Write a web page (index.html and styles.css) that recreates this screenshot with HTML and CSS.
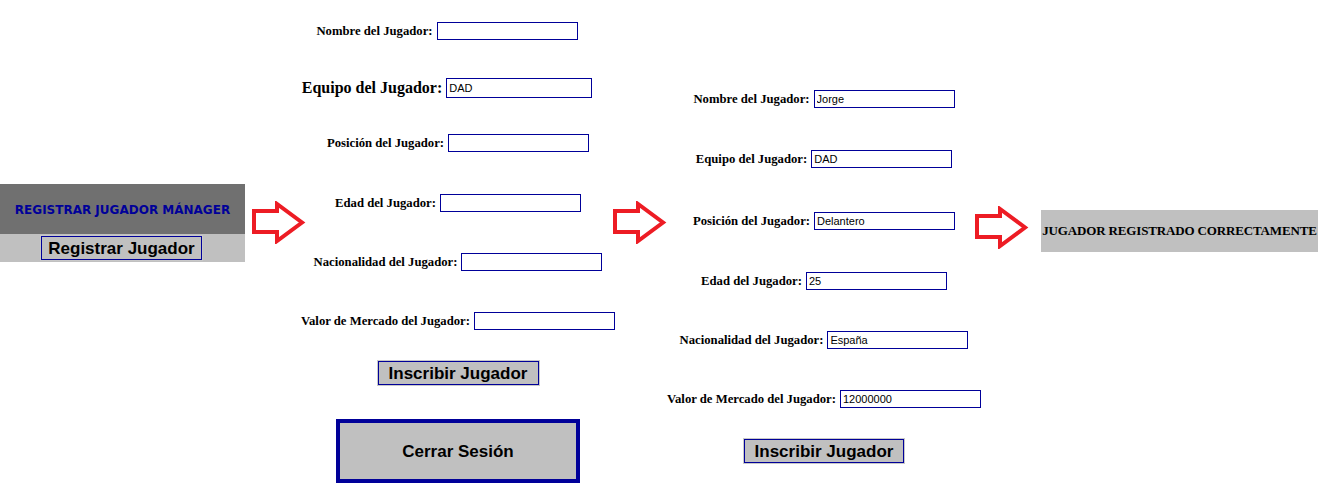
FILE: index.html
```html
<!DOCTYPE html>
<html lang="es">
<head>
<meta charset="utf-8">
<title>Registrar Jugador</title>
<link rel="stylesheet" href="styles.css">
</head>
<body>
<div class="canvas">
  <section class="menu">
    <div class="menu-title">REGISTRAR JUGADOR MÁNAGER</div>
    <div class="menu-bar"><button class="btn">Registrar Jugador</button></div>
  </section>

  <svg class="arrow arrow-1" width="55" height="43" viewBox="0 0 55 43"><path d="M3 10 H26 V3 L51 21.5 L26 40 V31 H3 Z" fill="#fff" stroke="#ed1c24" stroke-width="4" stroke-linejoin="miter"/></svg>

  <form class="form form-empty">
    <div class="row row-shift"><label class="lbl">Nombre del Jugador:</label><input class="field" type="text" value=""></div>
    <div class="row row-shift"><label class="lbl lbl-big">Equipo del Jugador:</label><input class="field field-tall" type="text" value="DAD"></div>
    <div class="row"><label class="lbl">Posición del Jugador:</label><input class="field" type="text" value=""></div>
    <div class="row"><label class="lbl">Edad del Jugador:</label><input class="field" type="text" value=""></div>
    <div class="row"><label class="lbl">Nacionalidad del Jugador:</label><input class="field" type="text" value=""></div>
    <div class="row"><label class="lbl">Valor de Mercado del Jugador:</label><input class="field" type="text" value=""></div>
    <div class="row"><button class="btn" type="button">Inscribir Jugador</button></div>
    <div class="row"><button class="btn btn-logout" type="button">Cerrar Sesión</button></div>
  </form>

  <svg class="arrow arrow-2" width="55" height="43" viewBox="0 0 55 43"><path d="M3 10 H26 V3 L51 21.5 L26 40 V31 H3 Z" fill="#fff" stroke="#ed1c24" stroke-width="4" stroke-linejoin="miter"/></svg>

  <form class="form form-filled">
    <div class="row"><label class="lbl">Nombre del Jugador:</label><input class="field" type="text" value="Jorge"></div>
    <div class="row"><label class="lbl">Equipo del Jugador:</label><input class="field" type="text" value="DAD"></div>
    <div class="row"><label class="lbl">Posición del Jugador:</label><input class="field" type="text" value="Delantero"></div>
    <div class="row"><label class="lbl">Edad del Jugador:</label><input class="field" type="text" value="25"></div>
    <div class="row"><label class="lbl">Nacionalidad del Jugador:</label><input class="field" type="text" value="España"></div>
    <div class="row"><label class="lbl">Valor de Mercado del Jugador:</label><input class="field" type="text" value="12000000"></div>
    <div class="row"><button class="btn btn-narrow" type="button">Inscribir Jugador</button></div>
  </form>

  <svg class="arrow arrow-3" width="55" height="43" viewBox="0 0 55 43"><path d="M3 10 H26 V3 L51 21.5 L26 40 V31 H3 Z" fill="#fff" stroke="#ed1c24" stroke-width="4" stroke-linejoin="miter"/></svg>

  <div class="result">JUGADOR REGISTRADO CORRECTAMENTE</div>
</div>
</body>
</html>
```
FILE: styles.css
```css
html, body {
  margin: 0;
  padding: 0;
  background: #fff;
}
body {
  font-family: "Liberation Serif", "Times New Roman", serif;
  color: #000;
  width: 1333px;
  height: 496px;
  overflow: hidden;
}
.canvas {
  display: flex;
  align-items: flex-start;
}

/* left menu */
.menu {
  width: 245px;
  margin-top: 184px;
  flex: none;
}
.menu-title {
  height: 50px;
  background: #707070;
  display: flex;
  align-items: center;
  justify-content: center;
  padding-top: 2px;
  box-sizing: border-box;
  font-family: "DejaVu Sans", Verdana, sans-serif;
  font-weight: 800;
  font-size: 12px;
  color: #000099;
}
.menu-bar {
  height: 28px;
  background: #c0c0c0;
  display: flex;
  align-items: center;
  justify-content: center;
  padding-right: 2px;
  box-sizing: border-box;
}

/* buttons */
.btn {
  width: 161px;
  height: 24px;
  margin: 0;
  padding: 2px 0 0;
  background: #c0c0c0;
  border: 1px solid #000099;
  box-shadow: 0 0 0 1px #c8c8c8;
  font-family: "Liberation Sans", Arial, sans-serif;
  font-weight: bold;
  font-size: 17px;
  color: #000;
  line-height: 20px;
}
.btn-narrow {
  width: 160px;
}
.btn-logout {
  width: 244px;
  height: 64px;
  border: 4px solid #000099;
  box-shadow: none;
}

/* arrows */
.arrow {
  flex: none;
  display: block;
}
.arrow-1 {
  margin-left: 6px;
  margin-top: 201px;
}
.arrow-2 {
  margin-left: -6px;
  margin-top: 201px;
}
.arrow-3 {
  margin-left: -10px;
  margin-top: 206px;
}

/* forms */
.form {
  flex: none;
  width: 320px;
  margin: 0;
  display: grid;
}
.form-empty {
  margin-left: -8px;
  padding-top: 22px;
  grid-template-rows: 56px 56px 60px 59px 59px 49px 58px 64px;
}
.form-filled {
  margin-left: -3px;
  padding-top: 90px;
  grid-template-rows: 60px 62px 60px 59px 59px 49px 24px;
}
.row {
  display: flex;
  align-items: center;
  justify-content: center;
  gap: 4px;
  align-self: start;
}
.row-shift {
  padding-right: 22px;
}
.lbl {
  font-family: "Liberation Serif", "Times New Roman", serif;
  font-weight: bold;
  font-size: 12.7px;
  white-space: nowrap;
}
.lbl-big {
  font-size: 16px;
}
.field {
  width: 141px;
  height: 18px;
  box-sizing: border-box;
  margin: 0;
  padding: 0 2px;
  border: 1px solid #000099;
  background: #fff;
  font-family: "Liberation Sans", Tahoma, sans-serif;
  font-size: 11px;
  color: #000;
  outline: none;
}
.field-tall {
  width: 146px;
  height: 20px;
}

/* result */
.result {
  flex: none;
  margin-left: 12px;
  margin-top: 210px;
  width: 277px;
  height: 42px;
  background: #c0c0c0;
  display: flex;
  align-items: center;
  justify-content: center;
  font-family: "Liberation Serif", "Times New Roman", serif;
  font-weight: bold;
  font-size: 13px;
  white-space: nowrap;
  letter-spacing: -0.15px;
}
```
